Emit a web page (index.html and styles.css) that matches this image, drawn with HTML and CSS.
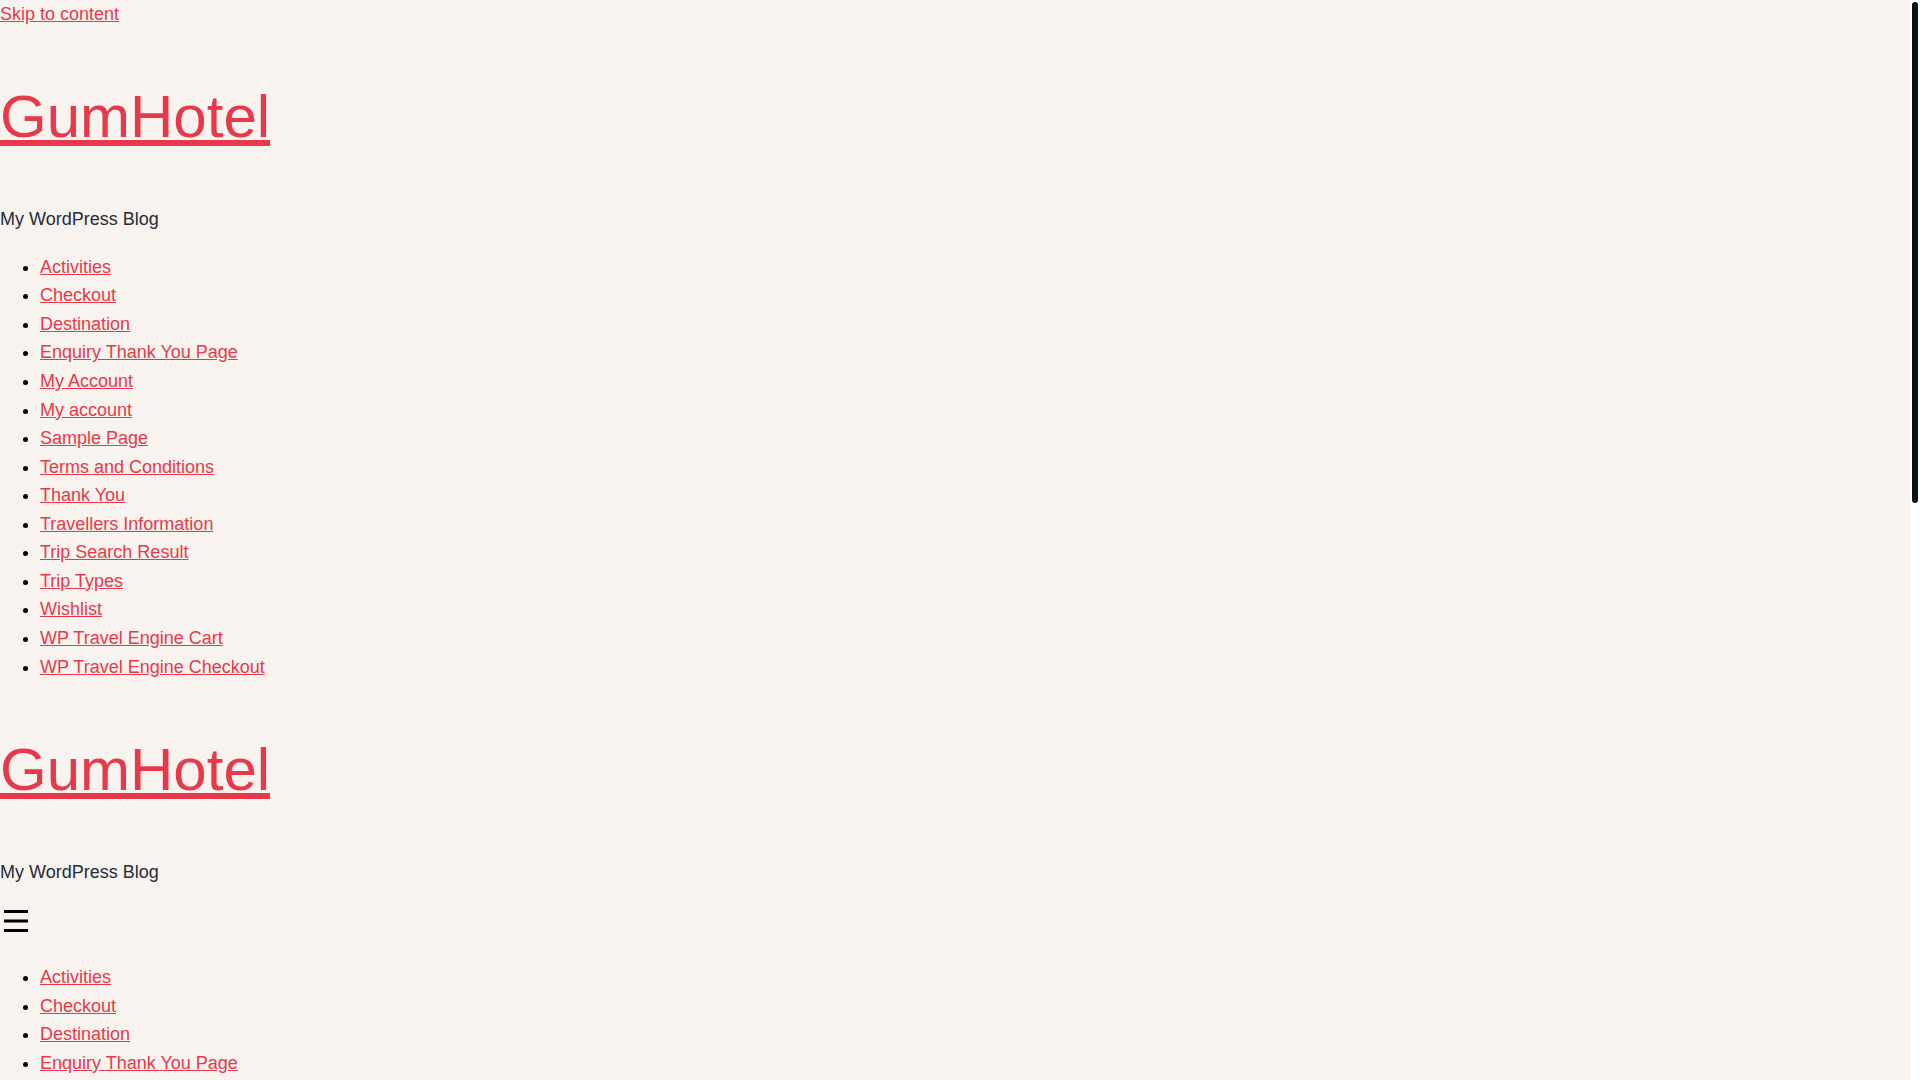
FILE: index.html
```html
<!DOCTYPE html>
<html lang="en">
<head>
<meta charset="utf-8">
<title>GumHotel – My WordPress Blog</title>
<link rel="stylesheet" href="styles.css">
</head>
<body>
<a class="skip-link" href="#content">Skip to content</a>
<header class="site-header">
  <p class="site-title"><a href="#">GumHotel</a></p>
  <p class="site-description">My WordPress Blog</p>
  <nav class="menu">
    <ul>
      <li><a href="#">Activities</a></li>
      <li><a href="#">Checkout</a></li>
      <li><a href="#">Destination</a></li>
      <li><a href="#">Enquiry Thank You Page</a></li>
      <li><a href="#">My Account</a></li>
      <li><a href="#">My account</a></li>
      <li><a href="#">Sample Page</a></li>
      <li><a href="#">Terms and Conditions</a></li>
      <li><a href="#">Thank You</a></li>
      <li><a href="#">Travellers Information</a></li>
      <li><a href="#">Trip Search Result</a></li>
      <li><a href="#">Trip Types</a></li>
      <li><a href="#">Wishlist</a></li>
      <li><a href="#">WP Travel Engine Cart</a></li>
      <li><a href="#">WP Travel Engine Checkout</a></li>
    </ul>
  </nav>
</header>
<header class="mobile-header">
  <p class="site-title second"><a href="#">GumHotel</a></p>
  <p class="site-description second">My WordPress Blog</p>
  <button class="toggle" type="button" aria-label="Menu">
    <svg width="24" height="24" viewBox="0 0 24 24"><rect x="0" y="1" width="24" height="3"/><rect x="0" y="10.5" width="24" height="3"/><rect x="0" y="20" width="24" height="3"/></svg>
  </button>
  <nav class="menu mobile">
    <ul>
      <li><a href="#">Activities</a></li>
      <li><a href="#">Checkout</a></li>
      <li><a href="#">Destination</a></li>
      <li><a href="#">Enquiry Thank You Page</a></li>
      <li><a href="#">My Account</a></li>
      <li><a href="#">My account</a></li>
      <li><a href="#">Sample Page</a></li>
      <li><a href="#">Terms and Conditions</a></li>
      <li><a href="#">Thank You</a></li>
      <li><a href="#">Travellers Information</a></li>
      <li><a href="#">Trip Search Result</a></li>
      <li><a href="#">Trip Types</a></li>
      <li><a href="#">Wishlist</a></li>
      <li><a href="#">WP Travel Engine Cart</a></li>
      <li><a href="#">WP Travel Engine Checkout</a></li>
    </ul>
  </nav>
</header>
<main id="content" class="site-content"></main>
<div class="scrollbar" aria-hidden="true"><div class="scrollbar-thumb"></div></div>
</body>
</html>
```
FILE: styles.css
```css
html {
  background: #f8f3ef;
}
body {
  margin: 0;
  background: #f8f3ef;
  color: #232d38;
  font-family: "Liberation Sans", Arial, sans-serif;
  font-size: 18px;
  line-height: 28.57px;
}
a {
  color: #e63a4a;
}
.skip-link {
  display: block;
  width: max-content;
}
.site-title {
  margin: 52.6px 0 0 0;
  font-size: 60px;
  line-height: 72px;
}
.site-title.second {
  margin-top: 53.3px;
}
.site-description {
  margin: 52.3px 0 18.7px 0;
}
.site-description.second {
  margin: 51.3px 0 0 0;
}
.menu ul {
  margin: 0;
  padding-left: 40px;
  list-style: disc;
  color: #000;
}
.toggle {
  display: block;
  margin: 22.5px 0 0 0;
  padding: 0 0 0 4px;
  border: 0;
  background: transparent;
  line-height: 0;
}
.toggle svg {
  display: block;
  fill: #000;
}
.menu.mobile {
  margin-top: 30.5px;
}
.site-content {
  height: 935px;
}
.scrollbar {
  position: fixed;
  top: 0;
  right: 0;
  bottom: 0;
  width: 10px;
  background: #ffffff;
}
.scrollbar-thumb {
  margin: 2px 2px 0 2px;
  height: 501px;
  background: #111111;
  border-radius: 3px;
}
```
